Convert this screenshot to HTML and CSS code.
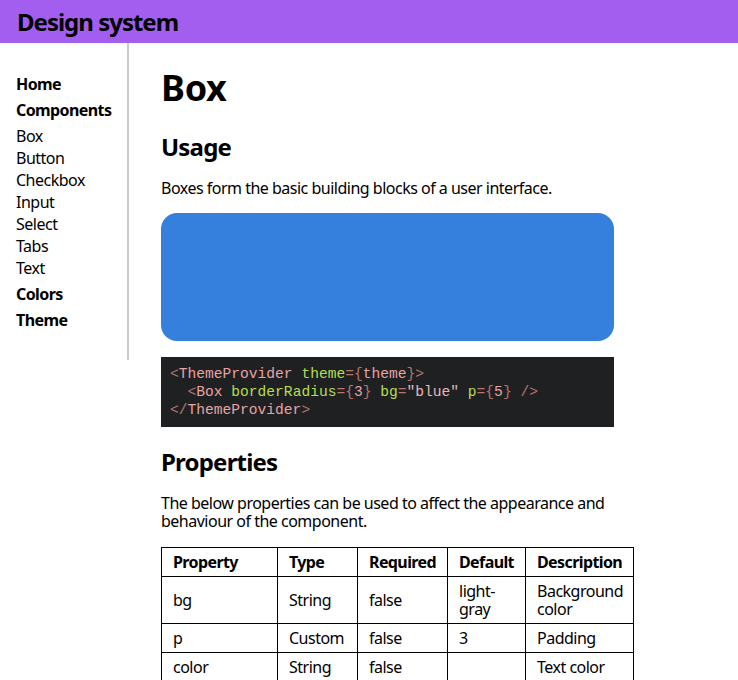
FILE: index.html
```html
<!DOCTYPE html>
<html lang="en">
<head>
<meta charset="utf-8">
<title>Design system</title>
<link rel="stylesheet" href="styles.css">
</head>
<body>
<header class="topbar">
  <h1 class="brand">Design system</h1>
</header>
<div class="layout">
  <nav class="sidebar">
    <a class="nav-head" href="#">Home</a>
    <a class="nav-head" href="#">Components</a>
    <a class="nav-item" href="#">Box</a>
    <a class="nav-item" href="#">Button</a>
    <a class="nav-item" href="#">Checkbox</a>
    <a class="nav-item" href="#">Input</a>
    <a class="nav-item" href="#">Select</a>
    <a class="nav-item" href="#">Tabs</a>
    <a class="nav-item" href="#">Text</a>
    <a class="nav-head" href="#">Colors</a>
    <a class="nav-head" href="#">Theme</a>
  </nav>
  <main class="content">
    <h1 class="page-title">Box</h1>
    <h2 class="section-title">Usage</h2>
    <p class="text">Boxes form the basic building blocks of a user interface.</p>
    <div class="demo-box"></div>
    <pre class="code"><span class="pn">&lt;</span><span class="tg">ThemeProvider</span> <span class="at">theme</span><span class="pn">={</span><span class="tg">theme</span><span class="pn">}&gt;</span>
  <span class="pn">&lt;</span><span class="tg">Box</span> <span class="at">borderRadius</span><span class="pn">={</span><span class="tg">3</span><span class="pn">}</span> <span class="at">bg</span><span class="pn">=</span><span class="st">"blue"</span> <span class="at">p</span><span class="pn">={</span><span class="tg">5</span><span class="pn">}</span> <span class="pn">/&gt;</span>
<span class="pn">&lt;/</span><span class="tg">ThemeProvider</span><span class="pn">&gt;</span></pre>
    <h2 class="section-title props-title">Properties</h2>
    <p class="text">The below properties can be used to affect the appearance and behaviour of the component.</p>
    <table class="props">
      <thead>
        <tr>
          <th class="c-prop">Property</th>
          <th class="c-type">Type</th>
          <th class="c-req">Required</th>
          <th class="c-def">Default</th>
          <th class="c-desc">Description</th>
        </tr>
      </thead>
      <tbody>
        <tr><td>bg</td><td>String</td><td>false</td><td>light-gray</td><td>Background color</td></tr>
        <tr><td>p</td><td>Custom</td><td>false</td><td>3</td><td>Padding</td></tr>
        <tr><td>color</td><td>String</td><td>false</td><td></td><td>Text color</td></tr>
      </tbody>
    </table>
  </main>
</div>
</body>
</html>
```

FILE: styles.css
```css
* { box-sizing: border-box; }

body {
  margin: 0;
  font-family: "Noto Sans", "Open Sans", sans-serif;
  font-size: 16px;
  letter-spacing: -0.5px;
  color: #000;
  background: #fff;
}

.topbar {
  height: 43px;
  background: #a35ef0;
  padding-left: 17px;
}

.brand {
  margin: 0;
  font-size: 24px;
  line-height: 43px;
  font-weight: 700;
  letter-spacing: -1px;
}

.layout {
  display: flex;
  align-items: flex-start;
}

.sidebar {
  flex: none;
  width: 129px;
  padding: 26px 0 25px 16px;
  border-right: 2px solid #cccccc;
}

.nav-head,
.nav-item {
  display: block;
  color: #000;
  text-decoration: none;
  line-height: 22px;
  font-size: 16px;
}

.nav-head {
  font-weight: 700;
  margin: 4px 0;
  letter-spacing: -0.6px;
}

.content {
  flex: none;
  width: 485px;
  padding-left: 32px;
}

.page-title {
  margin: 23px 0 0;
  font-size: 36px;
  line-height: 44px;
  font-weight: 700;
  letter-spacing: -0.3px;
}

.section-title {
  margin: 22px 0 0;
  font-size: 24px;
  line-height: 30px;
  font-weight: 700;
  letter-spacing: -0.8px;
}

.props-title {
  margin-top: 20px;
}

.text {
  margin: 17px 0 0;
  line-height: 18px;
}

.demo-box {
  margin-top: 16px;
  height: 128px;
  background: #3580dc;
  border-radius: 16px;
}

.code {
  margin: 16px 0 0;
  padding: 8px 9px;
  background: #1f2022;
  font-family: "Liberation Mono", "DejaVu Sans Mono", monospace;
  font-size: 14.6px;
  line-height: 18px;
  letter-spacing: 0;
  color: #e3a0a0;
}

.code .pn { color: #b8756e; }
.code .tg { color: #e8a4a4; }
.code .at { color: #b6df4e; }
.code .st { color: #eab6b6; }

.props {
  margin-top: 17px;
  border-collapse: collapse;
  table-layout: fixed;
  width: 472px;
}

.props th,
.props td {
  border: 1px solid #000;
  padding: 5px 11px;
  line-height: 18px;
  text-align: left;
  vertical-align: middle;
}

.props th {
  font-weight: 700;
  letter-spacing: -0.6px;
}

.c-prop { width: 116px; }
.c-type { width: 80px; }
.c-req { width: 90px; }
.c-def { width: 78px; }
.c-desc { width: 108px; }
```
